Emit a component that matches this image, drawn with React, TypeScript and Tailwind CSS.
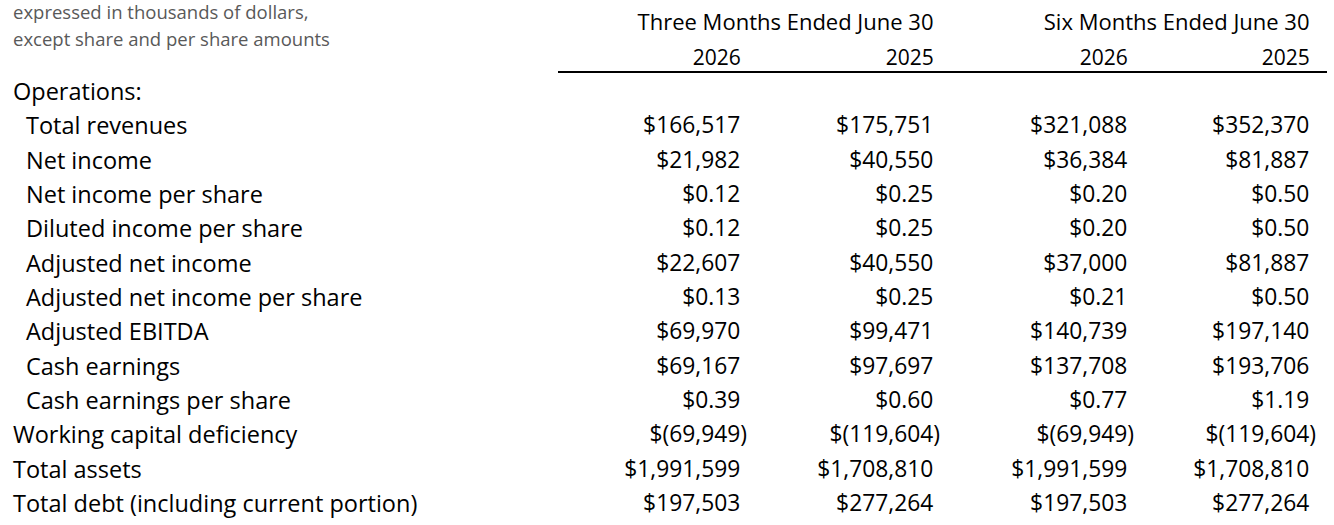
import React from "react";

type Row = { label: string; indent?: boolean; values?: string[] };

const rows: Row[] = [
  { label: "Operations:" },
  { label: "Total revenues", indent: true, values: ["$166,517", "$175,751", "$321,088", "$352,370"] },
  { label: "Net income", indent: true, values: ["$21,982", "$40,550", "$36,384", "$81,887"] },
  { label: "Net income per share", indent: true, values: ["$0.12", "$0.25", "$0.20", "$0.50"] },
  { label: "Diluted income per share", indent: true, values: ["$0.12", "$0.25", "$0.20", "$0.50"] },
  { label: "Adjusted net income", indent: true, values: ["$22,607", "$40,550", "$37,000", "$81,887"] },
  { label: "Adjusted net income per share", indent: true, values: ["$0.13", "$0.25", "$0.21", "$0.50"] },
  { label: "Adjusted EBITDA", indent: true, values: ["$69,970", "$99,471", "$140,739", "$197,140"] },
  { label: "Cash earnings", indent: true, values: ["$69,167", "$97,697", "$137,708", "$193,706"] },
  { label: "Cash earnings per share", indent: true, values: ["$0.39", "$0.60", "$0.77", "$1.19"] },
  { label: "Working capital deficiency", values: ["$(69,949)", "$(119,604)", "$(69,949)", "$(119,604)"] },
  { label: "Total assets", values: ["$1,991,599", "$1,708,810", "$1,991,599", "$1,708,810"] },
  { label: "Total debt (including current portion)", values: ["$197,503", "$277,264", "$197,503", "$277,264"] },
];

function Num({ v }: { v: string }) {
  const neg = v.endsWith(")");
  return (
    <div className="text-right whitespace-nowrap">
      {v}
      {!neg && <span className="invisible">)</span>}
    </div>
  );
}

export default function App() {
  return (
    <div
      className="w-[1334px] h-[525px] bg-white text-black overflow-hidden"
      style={{ fontFamily: '"Open Sans", "Noto Sans", "Liberation Sans", sans-serif' }}
    >
      <div className="flex">
        <div className="w-[558px] pl-[13px] -mt-[2px] text-[18.5px] leading-[27px] text-[#595959]">
          <div>expressed in thousands of dollars,</div>
          <div>except share and per share amounts</div>
        </div>
        <div className="w-[769px]">
          <div className="grid grid-cols-[382px_376px] h-[43px] leading-[43px] text-[22px]">
            <div className="text-right whitespace-nowrap">
              Three Months Ended June 30<span className="invisible">)</span>
            </div>
            <div className="text-right whitespace-nowrap">
              Six Months Ended June 30<span className="invisible">)</span>
            </div>
          </div>
          <div className="grid grid-cols-[189px_193px_194px_182px] h-[28px] leading-[28px] text-[21px]">
            <Num v="2026" />
            <Num v="2025" />
            <Num v="2026" />
            <Num v="2025" />
          </div>
          <div className="h-[2px] bg-black" />
        </div>
      </div>
      <div className="mt-[1px]">
        {rows.map((r, i) => (
          <div
            key={i}
            className="grid grid-cols-[558px_189px_193px_194px_182px] h-[34.33px] leading-[34.33px] text-[22.8px]"
          >
            <div
              className={
                r.indent
                  ? "pl-[26px] whitespace-nowrap text-[23.5px]"
                  : "pl-[13px] whitespace-nowrap text-[23.5px]"
              }
            >
              {r.label}
            </div>
            {r.values ? r.values.map((v, j) => <Num key={j} v={v} />) : null}
          </div>
        ))}
      </div>
    </div>
  );
}
